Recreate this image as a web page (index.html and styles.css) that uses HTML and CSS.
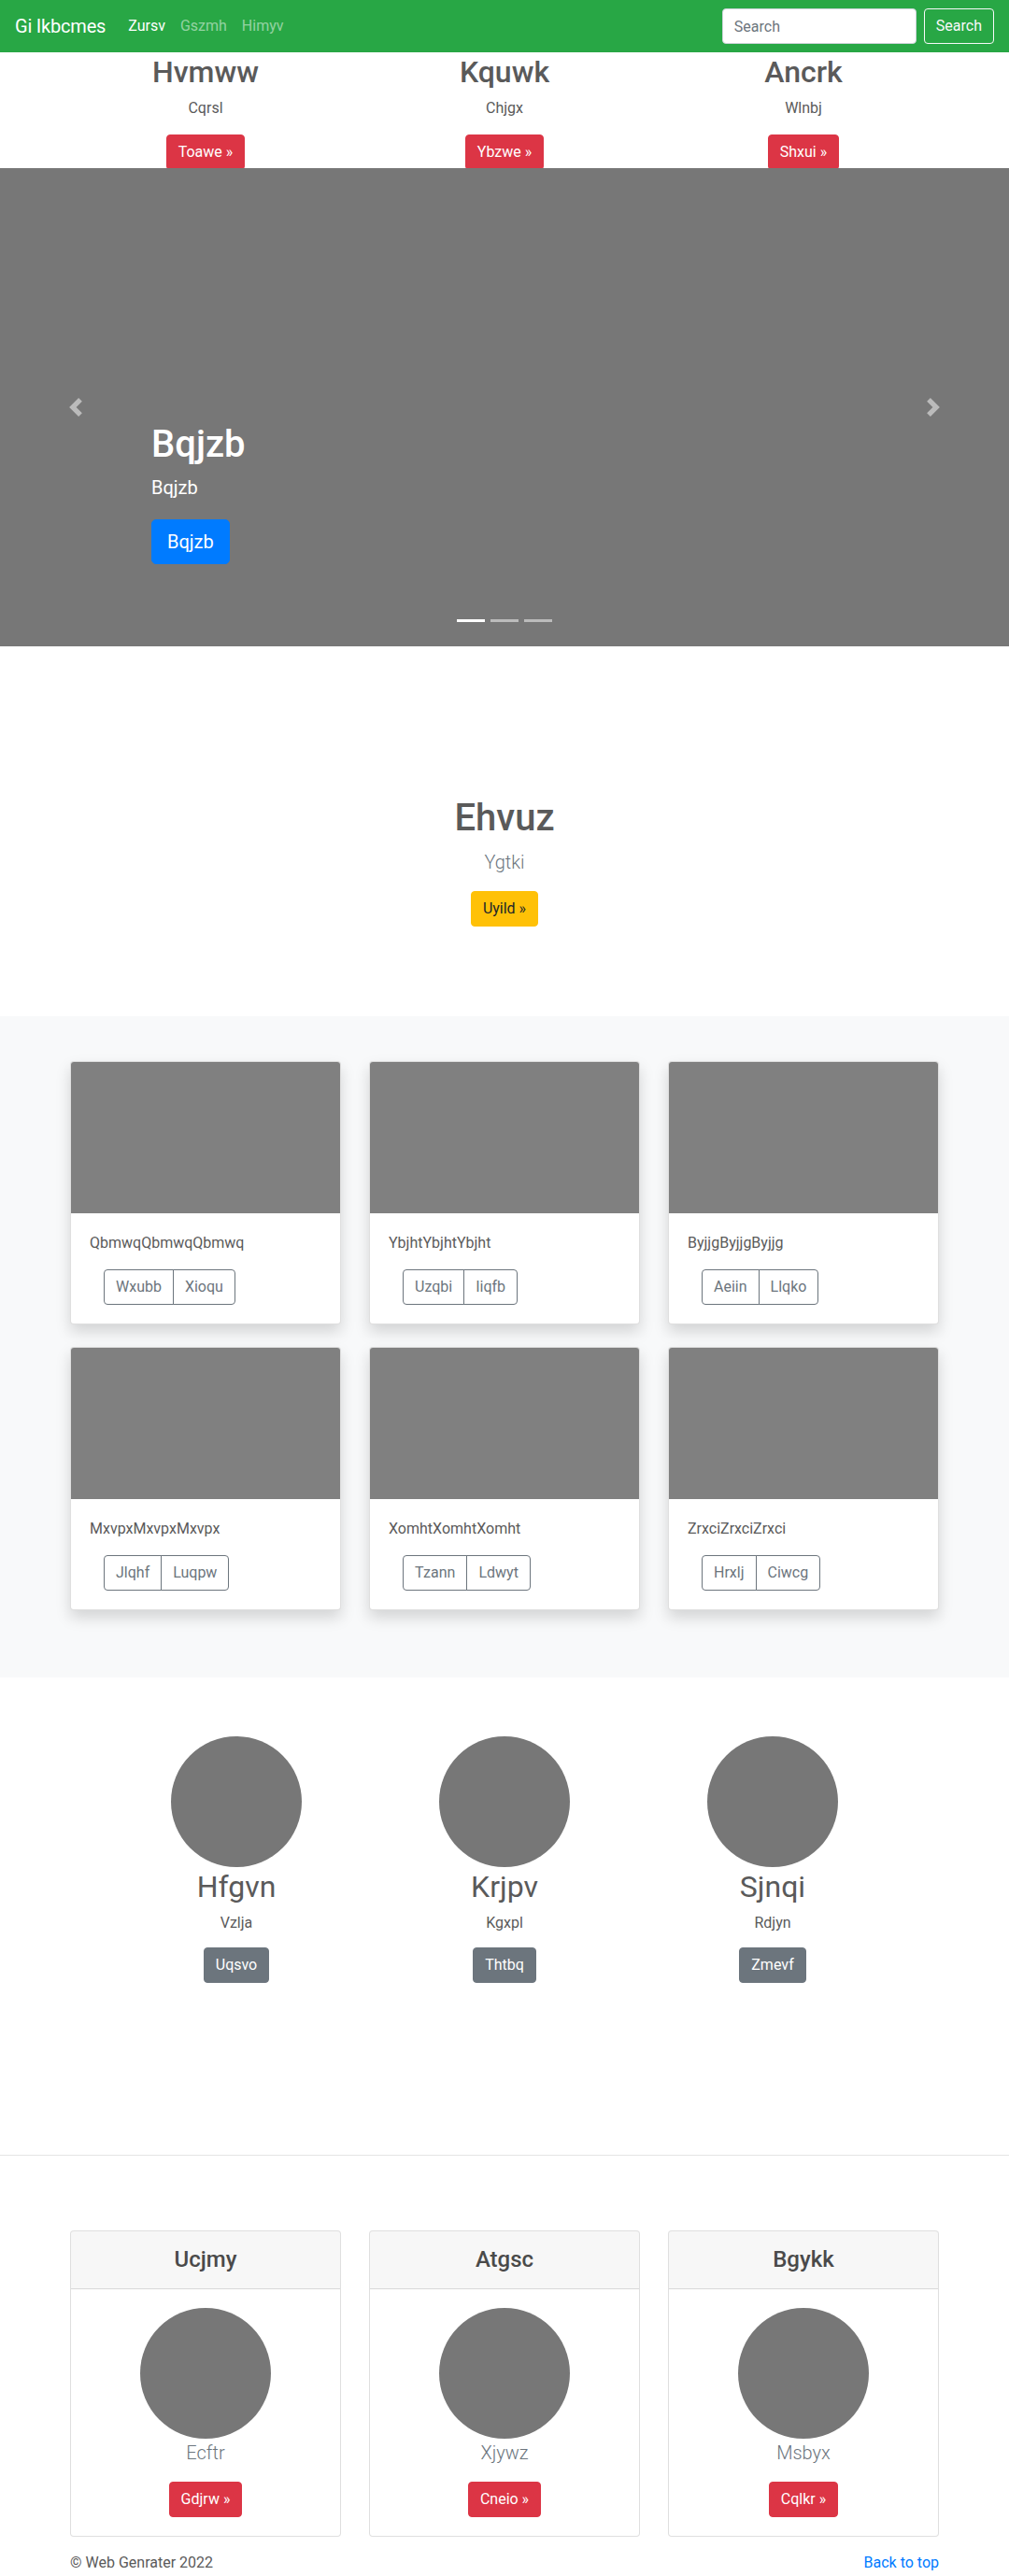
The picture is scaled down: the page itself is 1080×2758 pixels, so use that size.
FILE: index.html
```html
<!DOCTYPE html>
<html lang="en">
<head>
<meta charset="utf-8">
<title>Web Genrater</title>
<link rel="stylesheet" href="styles.css">
</head>
<body>
<header class="navbar">
  <a class="brand" href="#">Gi Ikbcmes</a>
  <nav class="nav">
    <a class="nav-link active" href="#">Zursv</a>
    <a class="nav-link" href="#">Gszmh</a>
    <a class="nav-link" href="#">Himyv</a>
  </nav>
  <form class="search">
    <input class="search-input" type="text" placeholder="Search">
    <button class="btn btn-outline-light" type="button">Search</button>
  </form>
</header>

<section class="features">
  <div class="container cols3">
    <div class="feature"><h2>Hvmww</h2><p>Cqrsl</p><a class="btn btn-danger" href="#">Toawe »</a></div>
    <div class="feature"><h2>Kquwk</h2><p>Chjgx</p><a class="btn btn-danger" href="#">Ybzwe »</a></div>
    <div class="feature"><h2>Ancrk</h2><p>Wlnbj</p><a class="btn btn-danger" href="#">Shxui »</a></div>
  </div>
</section>

<div class="carousel">
  <a class="carousel-control prev" href="#"><svg width="20" height="20" viewBox="0 0 8 8"><path fill="#fff" d="M5.25 0l-4 4 4 4 1.5-1.5L4.25 4l2.5-2.5L5.25 0z"/></svg></a>
  <div class="carousel-caption">
    <h1>Bqjzb</h1>
    <p>Bqjzb</p>
    <p><a class="btn btn-lg btn-primary" href="#">Bqjzb</a></p>
  </div>
  <a class="carousel-control next" href="#"><svg width="20" height="20" viewBox="0 0 8 8"><path fill="#fff" d="M2.75 0l-1.5 1.5L3.75 4l-2.5 2.5L2.75 8l4-4-4-4z"/></svg></a>
  <ol class="indicators"><li class="active"></li><li></li><li></li></ol>
</div>

<section class="jumbotron">
  <h1>Ehvuz</h1>
  <p class="lead muted">Ygtki</p>
  <p class="last"><a class="btn btn-warning" href="#">Uyild »</a></p>
</section>

<section class="album">
  <div class="container cards-grid">
    <div class="card shadow">
      <div class="card-img"></div>
      <div class="card-body"><p>QbmwqQbmwqQbmwq</p><div class="btn-group"><a class="btn btn-outline-secondary" href="#">Wxubb</a><a class="btn btn-outline-secondary" href="#">Xioqu</a></div></div>
    </div>
    <div class="card shadow">
      <div class="card-img"></div>
      <div class="card-body"><p>YbjhtYbjhtYbjht</p><div class="btn-group"><a class="btn btn-outline-secondary" href="#">Uzqbi</a><a class="btn btn-outline-secondary" href="#">Iiqfb</a></div></div>
    </div>
    <div class="card shadow">
      <div class="card-img"></div>
      <div class="card-body"><p>ByjjgByjjgByjjg</p><div class="btn-group"><a class="btn btn-outline-secondary" href="#">Aeiin</a><a class="btn btn-outline-secondary" href="#">Llqko</a></div></div>
    </div>
    <div class="card shadow">
      <div class="card-img"></div>
      <div class="card-body"><p>MxvpxMxvpxMxvpx</p><div class="btn-group"><a class="btn btn-outline-secondary" href="#">Jlqhf</a><a class="btn btn-outline-secondary" href="#">Luqpw</a></div></div>
    </div>
    <div class="card shadow">
      <div class="card-img"></div>
      <div class="card-body"><p>XomhtXomhtXomht</p><div class="btn-group"><a class="btn btn-outline-secondary" href="#">Tzann</a><a class="btn btn-outline-secondary" href="#">Ldwyt</a></div></div>
    </div>
    <div class="card shadow">
      <div class="card-img"></div>
      <div class="card-body"><p>ZrxciZrxciZrxci</p><div class="btn-group"><a class="btn btn-outline-secondary" href="#">Hrxlj</a><a class="btn btn-outline-secondary" href="#">Ciwcg</a></div></div>
    </div>
  </div>
</section>

<section class="marketing">
  <div class="marketing-grid">
    <div class="mk-col"><div class="circle"></div><h2>Hfgvn</h2><p>Vzlja</p><a class="btn btn-secondary" href="#">Uqsvo</a></div>
    <div class="mk-col"><div class="circle"></div><h2>Krjpv</h2><p>Kgxpl</p><a class="btn btn-secondary" href="#">Thtbq</a></div>
    <div class="mk-col"><div class="circle"></div><h2>Sjnqi</h2><p>Rdjyn</p><a class="btn btn-secondary" href="#">Zmevf</a></div>
  </div>
</section>

<hr class="divider">

<section class="container pricing">
  <div class="card pcard">
    <div class="card-header"><h4>Ucjmy</h4></div>
    <div class="pcard-body"><div class="circle"></div><p class="lead muted">Ecftr</p><a class="btn btn-danger" href="#">Gdjrw »</a></div>
  </div>
  <div class="card pcard">
    <div class="card-header"><h4>Atgsc</h4></div>
    <div class="pcard-body"><div class="circle"></div><p class="lead muted">Xjywz</p><a class="btn btn-danger" href="#">Cneio »</a></div>
  </div>
  <div class="card pcard">
    <div class="card-header"><h4>Bgykk</h4></div>
    <div class="pcard-body"><div class="circle"></div><p class="lead muted">Msbyx</p><a class="btn btn-danger" href="#">Cqlkr »</a></div>
  </div>
</section>

<footer class="container footer">
  <p>© Web Genrater 2022</p>
  <p><a class="link" href="#">Back to top</a></p>
</footer>
</body>
</html>
```

FILE: styles.css
```css
* { box-sizing: border-box; }

body {
  margin: 0;
  font-family: Roboto, "Segoe UI", "Liberation Sans", sans-serif;
  font-size: 16px;
  line-height: 1.5;
  color: #5a5a5a;
  background: #fff;
}

p { margin: 0 0 16px; }
h1, h2, h4 { margin: 0 0 8px; line-height: 1.2; font-weight: 500; }
h1 { font-size: 40px; }
h2 { font-size: 32px; }
h4 { font-size: 24px; }

.container {
  width: 960px;
  margin: 0 auto;
  padding: 0 15px;
}

/* Buttons */
.btn {
  display: inline-block;
  padding: 6px 12px;
  font-size: 16px;
  line-height: 1.5;
  border: 1px solid transparent;
  border-radius: 4px;
  text-decoration: none;
  font-family: inherit;
  font-weight: 400;
  cursor: pointer;
}
.btn-lg { padding: 8px 16px; font-size: 20px; border-radius: 5px; }
.btn-danger { background: #dc3545; border-color: #dc3545; color: #fff; }
.btn-primary { background: #007bff; border-color: #007bff; color: #fff; }
.btn-warning { background: #ffc107; border-color: #ffc107; color: #212529; }
.btn-secondary { background: #6c757d; border-color: #6c757d; color: #fff; }
.btn-outline-secondary { background: transparent; border-color: #6c757d; color: #6c757d; }
.btn-outline-light { background: transparent; border-color: #f8f9fa; color: #f8f9fa; }

.btn-group { display: inline-flex; margin-left: 15px; }
.btn-group .btn:first-child { border-top-right-radius: 0; border-bottom-right-radius: 0; }
.btn-group .btn + .btn { margin-left: -1px; border-top-left-radius: 0; border-bottom-left-radius: 0; }

/* Navbar */
.navbar {
  height: 56px;
  background: #28a745;
  display: flex;
  align-items: center;
  padding: 0 16px;
}
.brand {
  font-size: 20px;
  line-height: 30px;
  letter-spacing: -0.2px;
  color: #fff;
  text-decoration: none;
  margin-right: 16px;
}
.nav { display: flex; flex: 1; }
.nav-link {
  padding: 8px;
  color: rgba(255, 255, 255, 0.5);
  text-decoration: none;
}
.nav-link.active { color: #fff; }
.search { display: flex; align-items: center; }
.search-input {
  width: 208px;
  height: 38px;
  padding: 6px 12px;
  margin-right: 8px;
  font-family: inherit;
  font-size: 16px;
  color: #495057;
  background: #fff;
  border: 1px solid #ced4da;
  border-radius: 4px;
}
.search-input::placeholder { color: #6c757d; }

/* Features */
.features {
  height: 124px;
  overflow: hidden;
}
.cols3 {
  display: grid;
  grid-template-columns: repeat(3, 1fr);
  gap: 30px;
  text-align: center;
}
.feature h2 { margin-top: 2px; }

/* Carousel */
.carousel {
  position: relative;
  height: 512px;
  background: #777;
  margin-bottom: 64px;
  display: flex;
  flex-direction: column;
  justify-content: flex-end;
  padding: 0 15% 68px;
}
.carousel-caption { color: #fff; }
.carousel-caption h1 { font-size: 40px; font-weight: 500; margin-bottom: 8px; }
.carousel-caption p { font-size: 20px; line-height: 1.4; margin-bottom: 20px; }
.carousel-caption .btn-lg { line-height: 1.5; }
.carousel-control {
  position: absolute;
  top: 0;
  bottom: 0;
  width: 15%;
  display: flex;
  align-items: center;
  justify-content: center;
  opacity: 0.5;
}
.carousel-control.prev { left: 0; }
.carousel-control.next { right: 0; }
.indicators {
  position: absolute;
  left: 0;
  right: 0;
  bottom: 26px;
  margin: 0;
  padding: 0;
  list-style: none;
  display: flex;
  justify-content: center;
}
.indicators li {
  width: 30px;
  height: 3px;
  margin: 0 3px;
  background: rgba(255, 255, 255, 0.5);
}
.indicators li.active { background: #fff; }

/* Jumbotron */
.jumbotron {
  padding: 96px 0;
  text-align: center;
}
.jumbotron h1 { margin-bottom: 8px; }
.lead { font-size: 20px; font-weight: 300; }
.muted { color: #6c757d; }
.jumbotron .last { margin-bottom: 0; }

/* Album */
.album {
  background: #f8f9fa;
  padding: 48px 0;
}
.cards-grid {
  display: grid;
  grid-template-columns: repeat(3, 1fr);
  column-gap: 30px;
  row-gap: 24px;
  padding-bottom: 24px;
}
.card {
  background: #fff;
  border: 1px solid rgba(0, 0, 0, 0.125);
  border-radius: 4px;
  overflow: hidden;
}
.shadow { box-shadow: 0 8px 16px rgba(0, 0, 0, 0.15); }
.card-img { height: 162px; background: #808080; }
.card-body { padding: 20px; }

/* Marketing */
.marketing { padding-top: 63px; }
.marketing-grid {
  width: 861px;
  margin: 0 auto;
  display: grid;
  grid-template-columns: repeat(3, 1fr);
}
.mk-col {
  text-align: center;
  margin-bottom: 24px;
  display: flex;
  flex-direction: column;
  align-items: center;
}
.mk-col h2 { font-weight: 400; margin-top: 2px; }
.mk-col p { margin-bottom: 14px; }
.circle {
  width: 140px;
  height: 140px;
  border-radius: 50%;
  background: #777;
}

.divider {
  border: 0;
  border-top: 1px solid rgba(0, 0, 0, 0.1);
  margin: 160px 0 80px;
}

/* Pricing */
.pricing {
  display: grid;
  grid-template-columns: repeat(3, 1fr);
  gap: 30px;
  margin-bottom: 16px;
}
.pcard { text-align: center; }
.card-header {
  background: rgba(0, 0, 0, 0.03);
  border-bottom: 1px solid rgba(0, 0, 0, 0.125);
  padding: 16px 20px;
}
.card-header h4 { margin: 0; font-weight: 500; color: #4a4a4a; }
.pcard-body {
  padding: 20px;
  display: flex;
  flex-direction: column;
  align-items: center;
}

/* Footer */
.footer {
  display: flex;
  justify-content: space-between;
}
.link { color: #007bff; text-decoration: none; }
```
